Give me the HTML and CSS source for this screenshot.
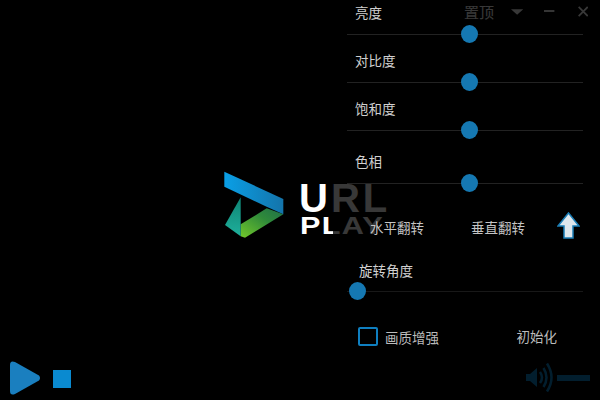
FILE: index.html
```html
<!DOCTYPE html>
<html lang="zh">
<head>
<meta charset="utf-8">
<title>URL Play</title>
<link rel="stylesheet" href="styles.css">
</head>
<body>
<div class="player">
  <div class="topbar">
    <span class="pin">置顶</span>
    <svg class="tri" width="13" height="6" viewBox="0 0 13 6"><path d="M0 0H13L6.5 6Z"/></svg>
    <svg class="min" width="11" height="2" viewBox="0 0 11 2"><path d="M0 0H11V2H0Z"/></svg>
    <svg class="close" width="11" height="11" viewBox="0 0 11 11"><path d="M.7.7L10.3 10.3M10.3.7L.7 10.3"/></svg>
  </div>
  <div class="video">
    <div class="logo">
      <svg class="mark" width="70" height="78" viewBox="0 0 210 234">
        <defs>
          <linearGradient id="b" x1="0" y1="0" x2="1" y2="0"><stop offset="0" stop-color="#0a9fe6"/><stop offset="1" stop-color="#1474aa"/></linearGradient>
          <linearGradient id="g" x1="0" y1="1" x2="1" y2="0"><stop offset="0" stop-color="#72c82a"/><stop offset=".6" stop-color="#2f8a3a"/><stop offset="1" stop-color="#1f6f4a"/></linearGradient>
          <linearGradient id="t" x1="0" y1="0" x2="0" y2="1"><stop offset="0" stop-color="#0e8474"/><stop offset="1" stop-color="#1fb09c"/></linearGradient>
        </defs>
        <path fill="url(#b)" d="M13 20L190 102V148L140 125L13 65Z"/>
        <path fill="url(#g)" d="M62 178L140 130L190 148L75 218L62 214Z"/>
        <path fill="url(#t)" d="M62 97V214L15 180Z"/>
      </svg>
      <div class="wordmark">
        <div class="word-url">URL</div>
        <div class="word-play">PLAY</div>
      </div>
    </div>
  </div>
  <div class="controls">
    <div class="transport">
      <svg width="31" height="34" viewBox="0 0 31 34"><path fill="#1a7fbf" d="M0 4Q0-1 5 1L29 14.500Q31 17 29 19.500L5 33Q0 35 0 30Z"/></svg>
      <span class="stop"></span>
    </div>
    <div class="volume">
      <svg width="27" height="31" viewBox="0 0 27 31">
        <path fill="#0a8ad0" d="M0 12H4L11 6V25L4 19H0Z"/>
        <path fill="none" stroke="#0a8ad0" stroke-width="2.500" d="M14 10Q18 15.500 14 21M17.500 6Q23.500 15.500 17.500 25M21 1.500Q30 15.500 21 29.500"/>
      </svg>
      <span class="vol-bar"></span>
    </div>
  </div>
  <aside class="panel">
    <div class="group first">
      <div class="label">亮度</div>
      <div class="slider"><span class="thumb" style="left:51.9%"></span></div>
    </div>
    <div class="group">
      <div class="label">对比度</div>
      <div class="slider"><span class="thumb" style="left:51.9%"></span></div>
    </div>
    <div class="group">
      <div class="label">饱和度</div>
      <div class="slider"><span class="thumb" style="left:51.9%"></span></div>
    </div>
    <div class="group hue">
      <div class="label">色相</div>
      <div class="slider"><span class="thumb" style="left:51.9%"></span></div>
    </div>
    <div class="flip-row">
      <span class="btn flip-h">水平翻转</span>
      <span class="btn flip-v">垂直翻转</span>
      <svg class="arrow" width="23" height="27" viewBox="0 0 23 27">
        <path fill="#dfe7ec" stroke="#1b7db5" stroke-width="1.500" d="M11.500 1L22 14H16V26H7V14H1Z"/>
      </svg>
    </div>
    <div class="group rotate">
      <div class="label">旋转角度</div>
      <div class="slider dim"><span class="thumb" style="left:4.400%"></span></div>
    </div>
    <div class="option-row">
      <label class="check"><span class="box"></span><span>画质增强</span></label>
      <span class="btn reset">初始化</span>
    </div>
  </aside>
</div>
</body>
</html>
```
FILE: styles.css
```css
* { box-sizing: border-box; }
html, body { margin: 0; height: 100%; background: #000; overflow: hidden; }
body { font-family: "Noto Sans CJK SC", "Liberation Sans", sans-serif; }

.player {
  position: relative;
  width: 600px;
  height: 400px;
  background: #000;
  display: flex;
  flex-direction: column;
}

.topbar {
  height: 24px;
  display: flex;
  align-items: center;
  padding: 0 12px 0 464px;
  color: #fff;
  fill: #fff;
  stroke: #fff;
}
.pin { font-size: 15px; line-height: 24px; width: 47px; flex: none; stroke: none; }
.tri { stroke: none; margin-top: -1px; }
.min { stroke: none; margin-left: 21px; margin-top: -2px; }
.close { fill: none; stroke-width: 1.800; margin-left: 23px; margin-top: -2px; }

.video { flex: 1; padding: 141px 0 0 220px; }
.logo { display: flex; align-items: flex-start; }
.mark { display: block; flex: none; }
.wordmark {
  margin: 14px 0 0 9px;
  color: #fff;
  font-family: "Liberation Sans", sans-serif;
  font-weight: 700;
}
.word-url { font-size: 40px; line-height: 38px; letter-spacing: 3px; }
.word-play {
  margin: -2px 0 0 1px;
  font-size: 24.500px;
  line-height: 22px;
  letter-spacing: 1px;
  transform: scaleX(1.25);
  transform-origin: left center;
}

.controls {
  height: 50px;
  display: flex;
  justify-content: space-between;
  align-items: flex-start;
  padding: 11px 10px 0 10px;
}
.transport { display: flex; align-items: center; gap: 12px; }
.stop { width: 18px; height: 18px; background: #0a8ad0; margin-top: 1px; }
.volume { display: flex; align-items: center; gap: 4px; margin-top: 1px; }
.vol-bar { width: 33px; height: 6px; background: #0a8ad0; }

.panel {
  position: absolute;
  top: 0;
  right: 0;
  bottom: 0;
  width: 267px;
  padding: 0 17px 0 14px;
  background: rgba(0, 0, 0, .78);
  color: #d0d0d0;
  font-size: 13.500px;
}
.group { margin-top: 10px; }
.group.first { margin-top: 5px; }
.group.hue { margin-top: 15px; }
.group.rotate { margin-top: 24px; }
.label { height: 18px; line-height: 14px; padding-left: 8px; margin-bottom: 2px; }
.rotate .label { padding-left: 12px; margin-bottom: 1px; }

.slider { position: relative; height: 18px; display: flex; align-items: center; }
.slider::before { content: ""; flex: 1; height: 1px; background: #222; }
.slider.dim::before { background: #181818; }
.thumb {
  position: absolute;
  top: 0;
  width: 17px;
  height: 18px;
  margin-left: -8.500px;
  border-radius: 50%;
  background: #1578b2;
}

.flip-row {
  height: 27px;
  margin-top: 20px;
  display: flex;
  align-items: center;
  padding-left: 23px;
  color: #c4c4c4;
}
.flip-row .btn { flex: none; padding-top: 3px; }
.flip-h { width: 101px; }
.flip-v { width: 86px; }
.arrow { flex: none; }

.option-row {
  margin-top: 27px;
  height: 19px;
  display: flex;
  align-items: center;
  justify-content: space-between;
  padding: 0 26px 0 11px;
  color: #bbb;
}
.check { display: flex; align-items: center; gap: 7px; line-height: 14px; }
.box { width: 20px; height: 19px; border: 2px solid #0f7fc0; border-radius: 2px; }
.reset { line-height: 15px; }
```
